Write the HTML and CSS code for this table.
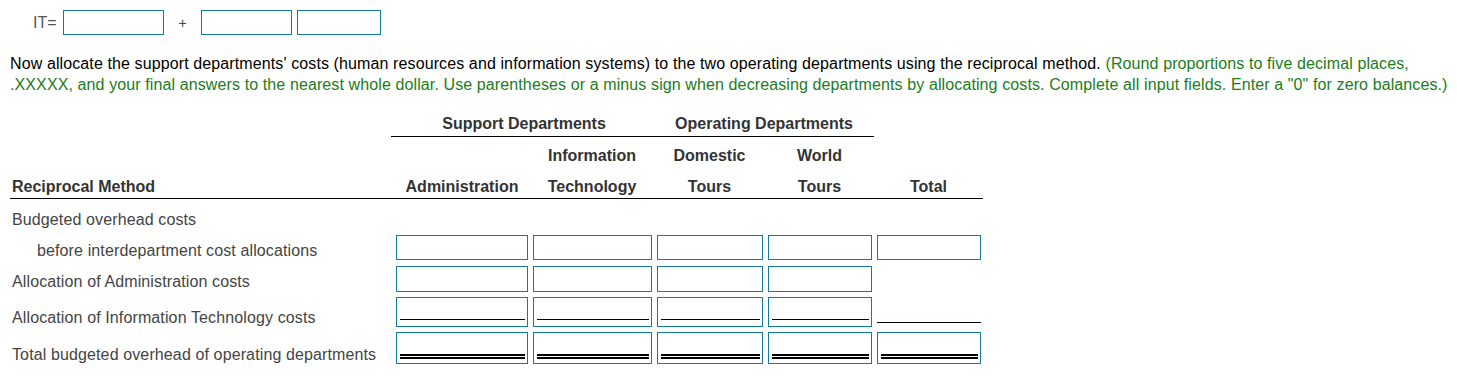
FILE: index.html
```html
<!DOCTYPE html>
<html>
<head>
<meta charset="utf-8">
<link rel="stylesheet" href="styles.css">
</head>
<body>
<div class="top">
  <span class="it-label">IT=</span>
  <span class="box box-a"></span>
  <span class="plus">+</span>
  <span class="box box-b"></span>
  <span class="box box-c"></span>
</div>
<p class="instructions">Now allocate the support departments' costs (human resources and information systems) to the two operating departments using the reciprocal method. <span class="hint">(Round proportions to five decimal places, .XXXXX, and your final answers to the nearest whole dollar. Use parentheses or a minus sign when decreasing departments by allocating costs. Complete all input fields. Enter a "0" for zero balances.)</span></p>

<div class="grid">
  <!-- header row A -->
  <div class="h hA"></div>
  <div class="h hA group span2 c-first">Support Departments</div>
  <div class="h hA group span2">Operating Departments</div>
  <div class="h hA"></div>
  <!-- header row B -->
  <div class="h hB"></div>
  <div class="h hB c-first"></div>
  <div class="h hB">Information</div>
  <div class="h hB">Domestic</div>
  <div class="h hB">World</div>
  <div class="h hB"></div>
  <!-- header row C -->
  <div class="h hC left">Reciprocal Method</div>
  <div class="h hC c-first">Administration</div>
  <div class="h hC">Technology</div>
  <div class="h hC">Tours</div>
  <div class="h hC">Tours</div>
  <div class="h hC">Total</div>

  <!-- body row 1 -->
  <div class="lbl r1">Budgeted overhead costs</div>
  <div class="cell r1 c-first"></div>
  <div class="cell r1"></div>
  <div class="cell r1"></div>
  <div class="cell r1"></div>
  <div class="cell r1"></div>

  <!-- body row 2 -->
  <div class="lbl indent">before interdepartment cost allocations</div>
  <div class="cell r2 c-first"><div class="inp h25"></div></div>
  <div class="cell r2"><div class="inp h25"></div></div>
  <div class="cell r2"><div class="inp h25"></div></div>
  <div class="cell r2"><div class="inp h25"></div></div>
  <div class="cell r2"><div class="inp h25"></div></div>

  <!-- body row 3 -->
  <div class="lbl">Allocation of Administration costs</div>
  <div class="cell c-first"><div class="inp h26"></div></div>
  <div class="cell"><div class="inp h26"></div></div>
  <div class="cell"><div class="inp h26"></div></div>
  <div class="cell"><div class="inp h26"></div></div>
  <div class="cell"></div>

  <!-- body row 4 -->
  <div class="lbl lbl-low">Allocation of Information Technology costs</div>
  <div class="cell c-first"><div class="inp h30 single"><div class="rule"></div></div></div>
  <div class="cell"><div class="inp h30 single"><div class="rule"></div></div></div>
  <div class="cell"><div class="inp h30 single"><div class="rule"></div></div></div>
  <div class="cell"><div class="inp h30 single"><div class="rule"></div></div></div>
  <div class="cell"><div class="plain-line"></div></div>

  <!-- body row 5 -->
  <div class="lbl lbl-low">Total budgeted overhead of operating departments</div>
  <div class="cell c-first"><div class="inp h32 double"><div class="rule2"></div></div></div>
  <div class="cell"><div class="inp h32 double"><div class="rule2"></div></div></div>
  <div class="cell"><div class="inp h32 double"><div class="rule2"></div></div></div>
  <div class="cell"><div class="inp h32 double"><div class="rule2"></div></div></div>
  <div class="cell"><div class="inp h32 double"><div class="rule2"></div></div></div>
</div>
</body>
</html>
```

FILE: styles.css
```css
html, body {
  margin: 0;
  padding: 0;
  background: #fff;
}
body {
  font-family: "Liberation Sans", Arial, sans-serif;
  font-size: 16px;
  color: #000;
}
.top {
  display: flex;
  align-items: center;
  padding: 10px 0 0 33px;
  height: 25px;
}
.it-label {
  color: #555;
  line-height: 20px;
  margin-right: 6px;
}
.box {
  display: block;
  height: 25px;
  box-sizing: border-box;
  border: 1px solid #137c9a;
}
.box-a { width: 101px; }
.box-b { width: 91px; }
.box-c { width: 84px; margin-left: 5px; }
.plus {
  color: #444;
  font-size: 14px;
  margin: 0 14px 0 15px;
  line-height: 20px;
}
.instructions {
  margin: 18px 8px 0 10px;
  line-height: 21px;
  letter-spacing: 0.11px;
}
.hint {
  color: #1a7d1a;
}
.grid {
  display: grid;
  grid-template-columns: 381px 139px 124px 111px 109px 109px;
  margin: 15px 0 0 10px;
  padding-top: 0;
  width: max-content;
}
.h {
  font-weight: bold;
  color: #333;
  line-height: 20px;
  text-align: center;
  padding-left: 2.5px;
  padding-right: 2.5px;
  white-space: nowrap;
}
.h.c-first, .cell.c-first {
  padding-left: 5px;
  padding-right: 2px;
}
.hA {
  padding-top: 4px;
  padding-bottom: 2px;
}
.group {
  border-bottom: 1px solid #000;
}
.span2 {
  grid-column: span 2;
}
.hB {
  padding-top: 9px;
  padding-bottom: 2px;
}
.hC {
  padding-top: 9px;
  padding-bottom: 1px;
  border-bottom: 1px solid #000;
}
.h.left {
  text-align: left;
  padding-left: 2px;
}
.lbl {
  color: #444;
  line-height: 20px;
  letter-spacing: 0.12px;
  padding-left: 2px;
  padding-bottom: 2px;
  display: flex;
  align-items: flex-end;
  white-space: nowrap;
}
.lbl-low {
  padding-bottom: 1px;
}
.lbl.indent {
  padding-left: 27px;
}
.lbl.r1 {
  height: 31px;
}
.cell {
  padding: 3px 2.5px 2px 2.5px;
}
.cell.r1 {
  padding: 0;
}
.cell.r2 {
  padding-bottom: 3px;
}
.inp {
  box-sizing: border-box;
  border: 1px solid #137c9a;
  background: #fff;
}
.h25 { height: 25px; }
.h26 { height: 26px; }
.h30 { height: 30px; }
.h32 { height: 32px; }
.single, .double {
  display: flex;
  flex-direction: column;
  justify-content: flex-end;
  padding: 0 2px 0 3px;
}
.single {
  padding-bottom: 6px;
}
.double {
  padding-bottom: 4px;
}
.rule {
  border-bottom: 1px solid #000;
}
.rule2 {
  border-bottom: 5px double #000;
}
.plain-line {
  height: 26px;
  box-sizing: border-box;
  border-bottom: 1px solid #000;
}
```
